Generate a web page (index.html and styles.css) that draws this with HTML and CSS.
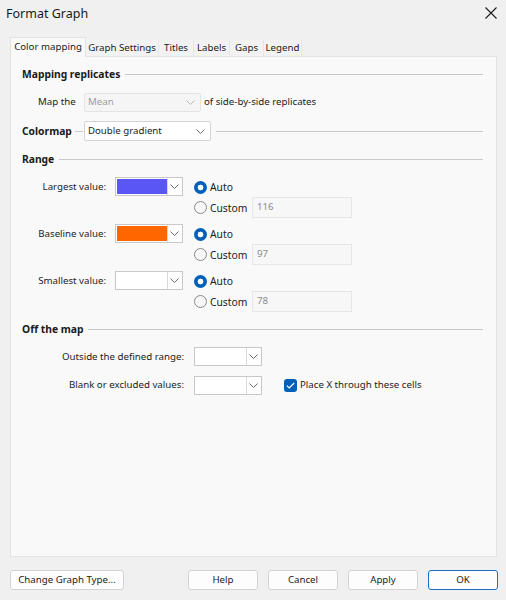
FILE: index.html
```html
<!DOCTYPE html>
<html>
<head>
<meta charset="utf-8">
<title>Format Graph</title>
<link rel="stylesheet" href="styles.css">
</head>
<body>
<div class="window">
  <div class="titlebar">
    <span class="title">Format Graph</span>
    <svg class="close" width="14" height="14" viewBox="0 0 14 14"><path d="M1.5 1.5 L12.5 12.5 M12.5 1.5 L1.5 12.5" stroke="#1c1c1c" stroke-width="1.1" fill="none"/></svg>
  </div>

  <div class="tabs">
    <div class="tab active t-color">Color mapping</div>
    <div class="tab t-graph">Graph Settings</div>
    <div class="tab t-titles">Titles</div>
    <div class="tab t-labels">Labels</div>
    <div class="tab t-gaps">Gaps</div>
    <div class="tab t-legend">Legend</div>
  </div>

  <div class="panel">
    <div class="heading h-mapping"><span class="htext">Mapping replicates</span><i class="rule"></i></div>

    <div class="row map-row">
      <span class="map-label">Map the</span>
      <div class="select disabled mean">
        <span>Mean</span>
        <svg class="chev" width="9" height="5" viewBox="0 0 9 5"><path d="M0.5 0.5 L4.5 4.5 L8.5 0.5" stroke="#b8b8b8" fill="none"/></svg>
      </div>
      <span class="after">of side-by-side replicates</span>
    </div>

    <div class="heading h-colormap">
      <span class="htext">Colormap</span><i class="rule stub"></i>
      <div class="select colormap">
        <span>Double gradient</span>
        <svg class="chev" width="9" height="5" viewBox="0 0 9 5"><path d="M0.5 0.5 L4.5 4.5 L8.5 0.5" stroke="#6a6a6a" fill="none"/></svg>
      </div>
      <i class="rule"></i>
    </div>

    <div class="heading h-range"><span class="htext">Range</span><i class="rule"></i></div>

    <div class="range-block first">
      <span class="range-label">Largest value:</span>
      <div class="color-select"><span class="swatch blue"></span><span class="drop"><svg class="chev" width="9" height="5" viewBox="0 0 9 5"><path d="M0.5 0.5 L4.5 4.5 L8.5 0.5" stroke="#6a6a6a" fill="none"/></svg></span></div>
      <div class="radios">
        <div class="radio-row"><span class="radio on"></span><span class="rtext">Auto</span></div>
        <div class="radio-row"><span class="radio"></span><span class="rtext">Custom</span><span class="num">116</span></div>
      </div>
    </div>

    <div class="range-block">
      <span class="range-label">Baseline value:</span>
      <div class="color-select"><span class="swatch orange"></span><span class="drop"><svg class="chev" width="9" height="5" viewBox="0 0 9 5"><path d="M0.5 0.5 L4.5 4.5 L8.5 0.5" stroke="#6a6a6a" fill="none"/></svg></span></div>
      <div class="radios">
        <div class="radio-row"><span class="radio on"></span><span class="rtext">Auto</span></div>
        <div class="radio-row"><span class="radio"></span><span class="rtext">Custom</span><span class="num">97</span></div>
      </div>
    </div>

    <div class="range-block">
      <span class="range-label">Smallest value:</span>
      <div class="color-select"><span class="swatch white"></span><span class="drop"><svg class="chev" width="9" height="5" viewBox="0 0 9 5"><path d="M0.5 0.5 L4.5 4.5 L8.5 0.5" stroke="#6a6a6a" fill="none"/></svg></span></div>
      <div class="radios">
        <div class="radio-row"><span class="radio on"></span><span class="rtext">Auto</span></div>
        <div class="radio-row"><span class="radio"></span><span class="rtext">Custom</span><span class="num">78</span></div>
      </div>
    </div>

    <div class="heading h-off"><span class="htext">Off the map</span><i class="rule"></i></div>

    <div class="row off-row first">
      <span class="off-label">Outside the defined range:</span>
      <div class="color-select"><span class="swatch white"></span><span class="drop"><svg class="chev" width="9" height="5" viewBox="0 0 9 5"><path d="M0.5 0.5 L4.5 4.5 L8.5 0.5" stroke="#6a6a6a" fill="none"/></svg></span></div>
    </div>

    <div class="row off-row second">
      <span class="off-label">Blank or excluded values:</span>
      <div class="color-select"><span class="swatch white"></span><span class="drop"><svg class="chev" width="9" height="5" viewBox="0 0 9 5"><path d="M0.5 0.5 L4.5 4.5 L8.5 0.5" stroke="#6a6a6a" fill="none"/></svg></span></div>
      <span class="check"><svg width="9" height="7" viewBox="0 0 9 7"><path d="M0.8 3.6 L3.2 6 L8.2 1" stroke="#fff" stroke-width="1.2" fill="none"/></svg></span>
      <span class="check-text">Place X through these cells</span>
    </div>
  </div>

  <div class="buttons">
    <button class="btn change">Change Graph Type...</button>
    <span class="spacer"></span>
    <button class="btn">Help</button>
    <button class="btn">Cancel</button>
    <button class="btn">Apply</button>
    <button class="btn ok">OK</button>
  </div>
</div>
</body>
</html>
```

FILE: styles.css
```css
* { box-sizing: border-box; }

html, body {
  margin: 0;
  padding: 0;
}

body {
  width: 506px;
  height: 600px;
  background: #f0f0f0;
  font-family: "Noto Sans", "Liberation Sans", sans-serif;
  font-size: 9.7px;
  line-height: 14px;
  color: #1b1b1b;
  overflow: hidden;
}

.window {
  width: 506px;
  height: 600px;
  display: flex;
  flex-direction: column;
}

/* title bar */
.titlebar {
  height: 30px;
  display: flex;
  align-items: center;
  justify-content: space-between;
  padding: 0 8px 2px 6px;
}
.title {
  font-size: 12.5px;
  color: #1a1a1a;
}
.close { display: block; margin-top: -2px; }

/* tab strip */
.tabs {
  display: flex;
  align-items: flex-end;
  height: 19px;
  margin-top: 7px;
  padding-left: 10px;
}
.tab {
  height: 17px;
  line-height: 17px;
  text-align: center;
  background: #f2f2f2;
  border-right: 1px solid #e6e6e6;
  white-space: nowrap;
}
.tab.active {
  height: 20px;
  line-height: 17px;
  background: #f9f9f9;
  border: 1px solid #e2e2e2;
  border-bottom: none;
  position: relative;
  z-index: 1;
  margin-bottom: -1px;
}
.t-color { width: 76px; }
.t-graph { width: 73px; }
.t-titles { width: 35px; }
.t-labels { width: 36px; }
.t-gaps { width: 34px; }
.t-legend { width: 38px; }

/* tab page */
.panel {
  margin-left: 10px;
  width: 487px;
  height: 501px;
  background: #f9f9f9;
  border: 1px solid #e3e3e3;
  padding: 9px 13px 0 11px;
  display: flex;
  flex-direction: column;
}

.heading {
  display: flex;
  align-items: center;
  height: 16px;
}
.htext {
  font-weight: bold;
  font-size: 10.3px;
  color: #1a1a1a;
  white-space: nowrap;
}
.rule {
  flex: 1;
  height: 0;
  border-top: 1px solid #c9c9c9;
  margin-left: 5px;
}
.rule.stub {
  flex: 0 0 8px;
  margin: 0 1px 0 3px;
}

.h-colormap { height: 20px; margin-top: 9px; }
.h-range { margin-top: 10px; }
.h-off { margin-top: 9px; }

.row {
  display: flex;
  align-items: center;
  height: 20px;
}
.map-row { margin-top: 10px; }
.map-label { width: 62px; padding-left: 16px; }
.after { margin-left: 3px; }

/* dropdowns */
.select {
  display: flex;
  align-items: center;
  justify-content: space-between;
  height: 20px;
  background: #fff;
  border: 1px solid #d4d4d4;
  border-radius: 2px;
  padding: 0 5px 0 3px;
}
.select.disabled {
  background: #f5f5f5;
  border-color: #e4e4e4;
  color: #9d9d9d;
}
.mean { width: 117px; height: 19px; }
.colormap { width: 127px; }
.chev { display: block; }

.color-select {
  display: flex;
  width: 68px;
  height: 19px;
  background: #fff;
  border: 1px solid #c8c8c8;
  padding: 1px;
}
.swatch { width: 50px; height: 100%; }
.swatch.blue { background: #5a55f5; }
.swatch.orange { background: #ff6600; }
.swatch.white { background: #fff; }
.drop {
  flex: 1;
  display: flex;
  align-items: center;
  justify-content: center;
  border-left: 1px solid #d8d8d8;
  margin: -1px 0 -1px 0;
}

/* range blocks */
.range-block {
  display: flex;
  align-items: flex-start;
  height: 41px;
  margin-top: 6px;
}
.range-block.first { margin-top: 10px; }
.range-label {
  width: 84px;
  text-align: right;
  line-height: 19px;
  white-space: nowrap;
}
.range-block .color-select { margin-left: 9px; }
.radios {
  margin-left: 11px;
  display: flex;
  flex-direction: column;
}
.radio-row {
  display: flex;
  align-items: center;
  height: 20px;
}
.radio-row + .radio-row { height: 21px; }
.radio {
  width: 13px;
  height: 13px;
  border-radius: 50%;
  border: 1px solid #8a8a8a;
  background: #f7f7f7;
}
.radio.on {
  border: none;
  background: radial-gradient(circle, #fff 0 2.6px, #005fb8 3.2px);
}
.rtext {
  width: 42px;
  margin-left: 3px;
  font-size: 10.3px;
}
.num {
  width: 100px;
  height: 21px;
  border: 1px solid #e6e6e6;
  background: #f7f7f7;
  color: #8c8c8c;
  padding: 1px 0 0 4px;
  line-height: 16px;
  align-self: flex-start;
}

/* off the map */
.off-row.first { margin-top: 10px; height: 19px; }
.off-row.second { margin-top: 9px; }
.off-label {
  width: 162px;
  text-align: right;
  white-space: nowrap;
}
.off-row .color-select { margin-left: 10px; }
.check {
  width: 13px;
  height: 13px;
  margin-left: 22px;
  border-radius: 3px;
  background: #005fb8;
  display: flex;
  align-items: center;
  justify-content: center;
}
.check svg { display: block; }
.check-text { margin-left: 3px; }

/* dialog buttons */
.buttons {
  display: flex;
  align-items: center;
  margin-top: 13px;
  padding: 0 8px 0 10px;
}
.spacer { flex: 1; }
.btn {
  font: inherit;
  color: #1b1b1b;
  height: 20px;
  width: 70px;
  padding: 0;
  background: #fdfdfd;
  border: 1px solid #d3d3d3;
  border-radius: 3px;
  margin-left: 10px;
  white-space: nowrap;
}
.btn.change {
  width: 114px;
  margin-left: 0;
}
.btn.ok {
  border-color: #1b6fc2;
}
```
